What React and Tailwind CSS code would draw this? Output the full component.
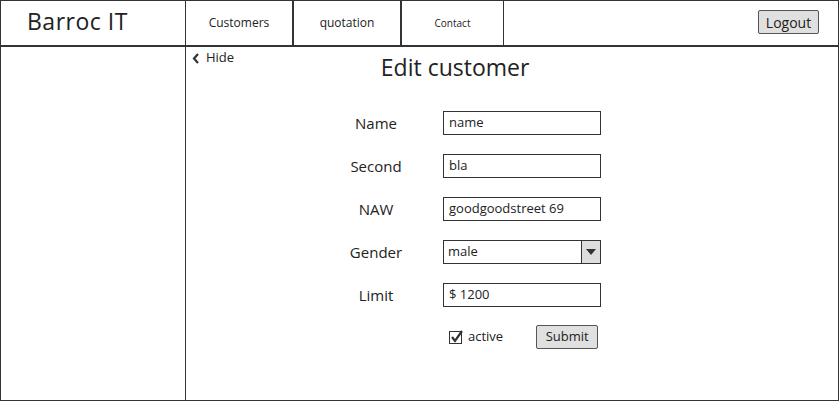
import React from "react";

const font = { fontFamily: '"Open Sans", "Liberation Sans", sans-serif' };

function Field({ label, children }) {
  return (
    <div className="flex items-center h-[24px]">
      <div className="w-[80px] text-center text-[15px] text-[#222]">{label}</div>
      <div className="ml-[27px]">{children}</div>
    </div>
  );
}

function Input({ value }) {
  return (
    <div className="w-[158px] h-[24px] border border-[#333] bg-white flex items-center pl-[5px] text-[13px] text-[#222]">
      {value}
    </div>
  );
}

export default function App() {
  return (
    <div style={font} className="w-[839px] h-[401px] border border-[#333] bg-white flex flex-col text-[#222] overflow-hidden">
      <div className="h-[46px] flex border-b-2 border-[#333] shrink-0">
        <div className="w-[185px] border-r border-[#333] flex items-center pl-[26px] text-[23px] tracking-[0.5px] pb-[4px]">
          Barroc IT
        </div>
        <div className="w-[108px] border-r-2 border-[#333] flex items-center justify-center text-[12px]">Customers</div>
        <div className="w-[108px] border-r-2 border-[#333] flex items-center justify-center text-[12px]">quotation</div>
        <div className="w-[102px] border-r border-[#333] flex items-center justify-center text-[10px]">Contact</div>
        <div className="flex-1 flex items-start justify-end pr-[19px] pt-[9px]">
          <div className="w-[61px] h-[24px] border border-[#555] bg-[#e0e0e0] rounded-[2px] flex items-center justify-center text-[14px]">
            Logout
          </div>
        </div>
      </div>
      <div className="flex flex-1">
        <div className="w-[185px] border-r border-[#333] shrink-0"></div>
        <div className="flex-1 flex flex-col">
          <div className="flex items-start">
            <div className="ml-[6px] mt-[3px] flex items-center gap-[6px] text-[13px] h-[16px]">
              <svg width="8" height="11" viewBox="0 0 8 11">
                <path d="M6 1 L2 5.5 L6 10" stroke="#333" strokeWidth="2.2" fill="none" />
              </svg>
              <span>Hide</span>
            </div>
            <div className="ml-[104px] mt-[6px] w-[234px] text-center text-[23px] leading-[28px]">Edit customer</div>
          </div>
          <div className="ml-[150px] mt-[30px] flex flex-col gap-[19px]">
            <Field label="Name"><Input value="name" /></Field>
            <Field label="Second"><Input value="bla" /></Field>
            <Field label="NAW"><Input value="goodgoodstreet 69" /></Field>
            <Field label="Gender">
              <div className="w-[158px] h-[24px] border border-[#333] bg-white flex items-center text-[13px]">
                <div className="flex-1 pl-[4px]">male</div>
                <div className="w-[19px] h-full border-l border-[#333] bg-[#ddd] flex items-center justify-center">
                  <svg width="10" height="6" viewBox="0 0 10 6"><path d="M0 0 H10 L5 6 Z" fill="#333" /></svg>
                </div>
              </div>
            </Field>
            <Field label="Limit"><Input value="$ 1200" /></Field>
          </div>
          <div className="ml-[263px] mt-[18px] flex items-center h-[24px]">
            <div className="relative w-[13px] h-[13px] border border-[#333] bg-white mt-[1px]">
              <svg className="absolute -top-[3px] left-0" width="14" height="15" viewBox="0 0 14 15">
                <path d="M2 8 L5 12 L12 2" stroke="#333" strokeWidth="2.2" fill="none" />
              </svg>
            </div>
            <span className="ml-[6px] text-[13px]">active</span>
            <div className="ml-[33px] w-[62px] h-[24px] border border-[#555] bg-[#e0e0e0] rounded-[2px] flex items-center justify-center text-[13px]">
              Submit
            </div>
          </div>
        </div>
      </div>
    </div>
  );
}
